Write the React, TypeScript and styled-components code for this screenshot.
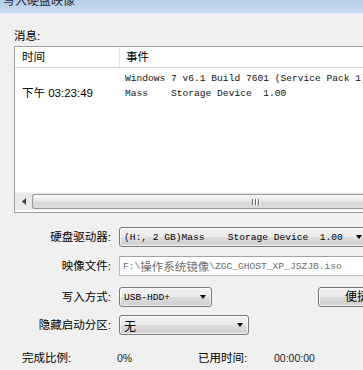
import React from "react";
import styled, { createGlobalStyle } from "styled-components";

const Global = createGlobalStyle`
  html, body { margin: 0; padding: 0; background: #f0f0f0; overflow: hidden; }
  #root { width: 363px; height: 370px; overflow: hidden; }
`;

const cjk = `"Liberation Sans", "Noto Sans CJK SC", sans-serif`;
const mono = `"Liberation Mono", "Noto Sans CJK SC", monospace`;

const Window = styled.div`
  width: 363px;
  height: 370px;
  overflow: hidden;
  background: #f0f0f0;
  font-family: ${cjk};
  font-size: 11.5px;
  color: #000;
  display: flex;
  flex-direction: column;
`;

const TitleBar = styled.div`
  height: 13px;
  flex: none;
  background: linear-gradient(#b6cde8, #c9daee);
  border-bottom: 1px solid #e2eaf4;
  overflow: hidden;
  padding-left: 3px;
`;

const TitleText = styled.div`
  font-size: 12px;
  line-height: 14px;
  margin-top: -6px;
  color: #1e2a3a;
`;

const Body = styled.div`
  display: flex;
  flex-direction: column;
  padding-left: 14px;
`;

const Caption = styled.div`
  margin-top: 13px;
  height: 18px;
  line-height: 18px;
  margin-bottom: 1px;
`;

const ListView = styled.div`
  width: 380px;
  height: 165px;
  border: 1px solid #9a9ea6;
  background: #fff;
  display: flex;
  flex-direction: column;
`;

const Header = styled.div`
  height: 20px;
  display: flex;
  border-bottom: 1px solid #d8d8d8;
  background: #fff;
`;

const HeaderCell = styled.div<{ $w?: number }>`
  width: ${(p) => (p.$w ? `${p.$w}px` : "auto")};
  flex: ${(p) => (p.$w ? "none" : "1")};
  padding-left: ${(p) => (p.$w ? 7 : 6)}px;
  box-sizing: border-box;
  line-height: 20px;
  border-right: ${(p) => (p.$w ? "1px solid #e3e3e3" : "none")};
`;

const Rows = styled.div`
  flex: 1;
  padding-top: 3px;
  display: flex;
  flex-direction: column;
`;

const Row = styled.div`
  display: flex;
  height: 15px;
  line-height: 15px;
`;

const TimeCell = styled.div`
  width: 105px;
  flex: none;
  padding-left: 7px;
  box-sizing: border-box;
  font-size: 11.5px;
  white-space: nowrap;
`;

const EventCell = styled.div`
  font-family: ${mono};
  font-size: 9.6px;
  white-space: pre;
  padding-left: 5px;
  color: #111;
`;

const HScroll = styled.div`
  height: 17px;
  display: flex;
  background: #e9e9e9;
  border-top: 1px solid #f4f4f4;
  margin-bottom: 2px;
`;

const ScrollArrow = styled.div`
  width: 17px;
  flex: none;
  display: flex;
  align-items: center;
  justify-content: center;
`;

const Thumb = styled.div`
  flex: 1;
  margin: 1px 0;
  border: 1px solid #9a9a9a;
  border-right: none;
  border-radius: 3px 0 0 3px;
  background: linear-gradient(#f6f6f6, #e6e6e6 50%, #d6d6d6 51%, #dadada);
  display: flex;
  align-items: center;
  padding-left: 219px;
`;

const Grip = styled.div`
  display: flex;
  gap: 2px;
  & > span {
    width: 1px;
    height: 6px;
    background: #6c6c6c;
    box-shadow: 1px 0 0 #fff;
  }
`;

const Form = styled.div`
  display: grid;
  grid-template-columns: 97px 1fr;
  column-gap: 8px;
  margin-top: 14px;
`;

const Label = styled.div<{ $mt: number }>`
  text-align: right;
  margin-top: ${(p) => p.$mt}px;
  height: 20px;
  line-height: 20px;
  white-space: nowrap;
`;

const Field = styled.div<{ $mt: number }>`
  margin-top: ${(p) => p.$mt}px;
  height: 20px;
  display: flex;
  align-items: center;
`;

const Combo = styled.div<{ $w: number }>`
  width: ${(p) => p.$w}px;
  height: 20px;
  flex: none;
  box-sizing: border-box;
  border: 1px solid #7a7a7a;
  border-radius: 3px;
  background: linear-gradient(#f2f2f2, #ebebeb 50%, #dddddd 51%, #cfcfcf);
  display: flex;
  align-items: center;
  padding-left: 4px;
  padding-right: 5px;
  box-shadow: inset 0 0 0 1px rgba(255, 255, 255, 0.7);
`;

const ComboText = styled.div<{ $cjk?: boolean }>`
  flex: 1;
  font-family: ${(p) => (p.$cjk ? cjk : mono)};
  font-size: ${(p) => (p.$cjk ? "12px" : "9.6px")};
  white-space: pre;
  overflow: hidden;
`;

const Arrow = styled.div`
  width: 0;
  height: 0;
  border-left: 3.5px solid transparent;
  border-right: 3.5px solid transparent;
  border-top: 4px solid #000;
  flex: none;
`;

const TextInput = styled.div`
  width: 260px;
  height: 20px;
  flex: none;
  box-sizing: border-box;
  border: 1px solid #b5b8c0;
  border-top-color: #9ea2aa;
  background: #fff;
  display: flex;
  align-items: center;
  padding-left: 3px;
  font-family: ${mono};
  font-size: 9.6px;
  color: #6d6d6d;
  white-space: pre;
  overflow: hidden;
`;

const InputCjk = styled.span`
  font-family: ${cjk};
  font-size: 11.5px;
`;

const Button = styled.div`
  margin-left: 106px;
  width: 70px;
  height: 20px;
  flex: none;
  box-sizing: border-box;
  border: 1px solid #707070;
  border-radius: 3px;
  background: linear-gradient(#f2f2f2, #ebebeb 50%, #dddddd 51%, #cfcfcf);
  box-shadow: inset 0 0 0 1px rgba(255, 255, 255, 0.7);
  padding-left: 26px;
  line-height: 18px;
  font-size: 12px;
  white-space: nowrap;
`;

const Status = styled.div`
  display: grid;
  grid-template-columns: 95px 81px 76px auto;
  margin-top: 15px;
  padding-left: 8px;
  height: 16px;
  line-height: 16px;
`;

const StatusValue = styled.div`
  font-size: 10.5px;
  color: #222;
`;

export default function App() {
  return (
    <>
      <Global />
      <Window>
        <TitleBar>
          <TitleText>写入硬盘映像</TitleText>
        </TitleBar>
        <Body>
          <Caption>消息:</Caption>
          <ListView>
            <Header>
              <HeaderCell $w={105}>时间</HeaderCell>
              <HeaderCell>事件</HeaderCell>
            </Header>
            <Rows>
              <Row>
                <TimeCell />
                <EventCell>Windows 7 v6.1 Build 7601 (Service Pack 1)</EventCell>
              </Row>
              <Row>
                <TimeCell>下午 03:23:49</TimeCell>
                <EventCell>Mass    Storage Device  1.00</EventCell>
              </Row>
            </Rows>
            <HScroll>
              <ScrollArrow>
                <svg width="4" height="7" viewBox="0 0 4 7">
                  <path d="M4 0 L0 3.5 L4 7 Z" fill="#3c3c3c" />
                </svg>
              </ScrollArrow>
              <Thumb>
                <Grip>
                  <span />
                  <span />
                  <span />
                </Grip>
              </Thumb>
            </HScroll>
          </ListView>
          <Form>
            <Label $mt={0}>硬盘驱动器:</Label>
            <Field $mt={0}>
              <Combo $w={249}>
                <ComboText>(H:, 2 GB)Mass    Storage Device  1.00</ComboText>
                <Arrow />
              </Combo>
            </Field>
            <Label $mt={9}>映像文件:</Label>
            <Field $mt={9}>
              <TextInput>
                F:\<InputCjk>操作系统镜像</InputCjk>\ZGC_GHOST_XP_JSZJB.iso
              </TextInput>
            </Field>
            <Label $mt={11}>写入方式:</Label>
            <Field $mt={11}>
              <Combo $w={93}>
                <ComboText>USB-HDD+</ComboText>
                <Arrow />
              </Combo>
              <Button>便捷启动</Button>
            </Field>
            <Label $mt={8}>隐藏启动分区:</Label>
            <Field $mt={8}>
              <Combo $w={130}>
                <ComboText $cjk>无</ComboText>
                <Arrow />
              </Combo>
            </Field>
          </Form>
          <Status>
            <div>完成比例:</div>
            <StatusValue>0%</StatusValue>
            <div>已用时间:</div>
            <StatusValue>00:00:00</StatusValue>
          </Status>
        </Body>
      </Window>
    </>
  );
}
